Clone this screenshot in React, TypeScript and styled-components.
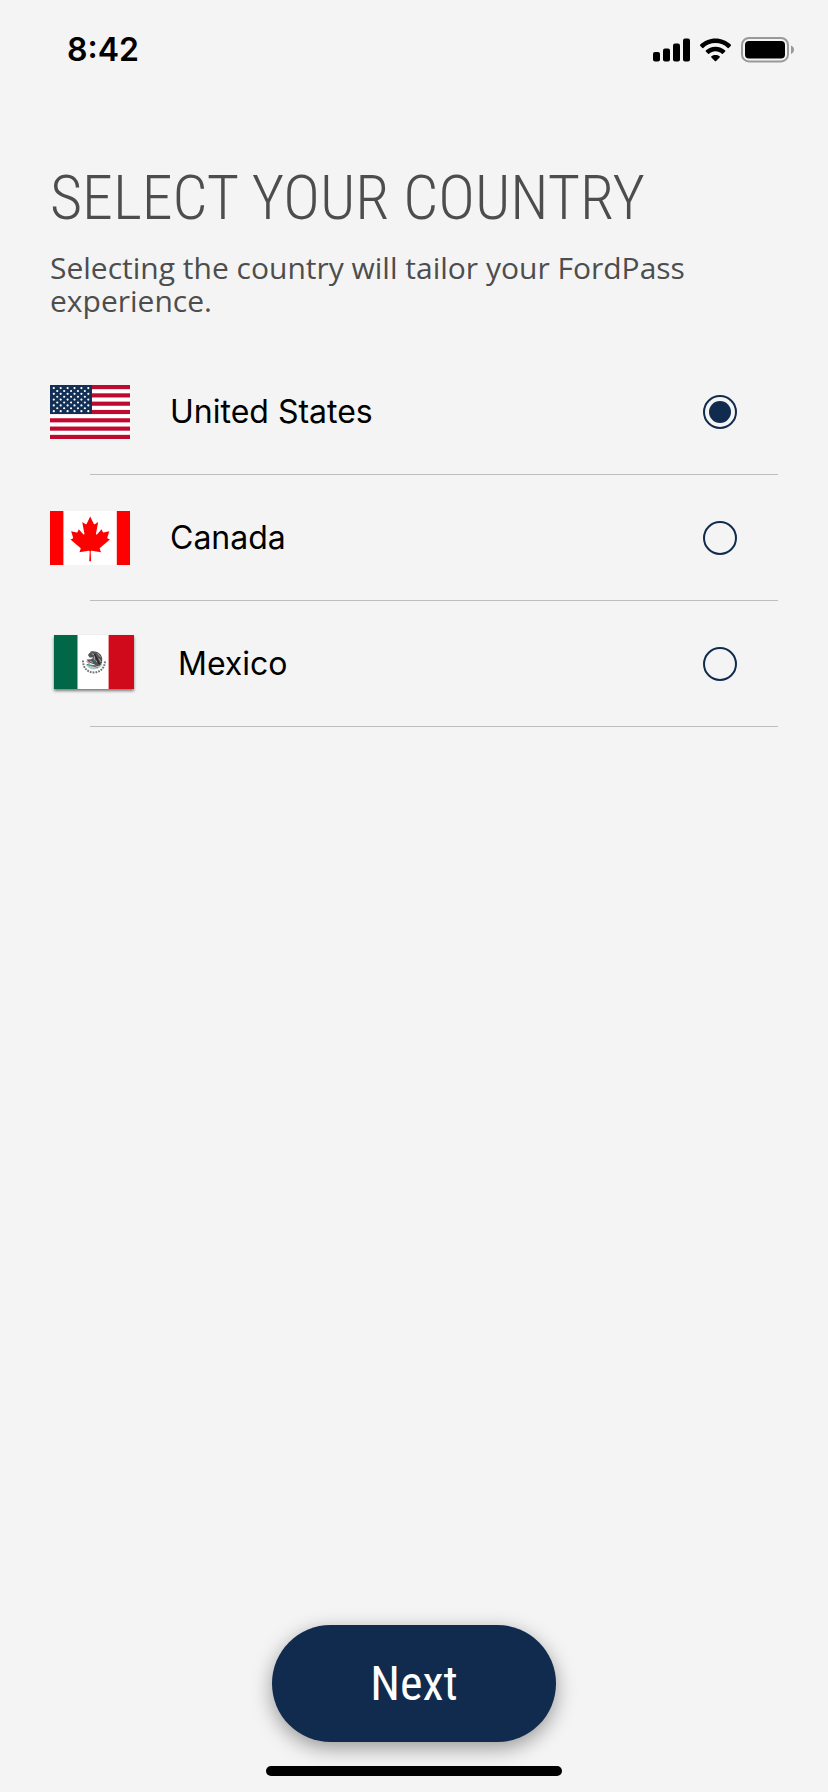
import React, { useState } from "react";
import styled, { createGlobalStyle } from "styled-components";

const NAVY = "#112b4e";

const GlobalStyle = createGlobalStyle`
  *, *::before, *::after { box-sizing: border-box; }
  body { margin: 0; background: #f4f4f4; }
`;

const Screen = styled.div`
  display: flex;
  flex-direction: column;
  min-height: 100vh;
  background: #f4f4f4;
  color: #000;
  font-family: Inter, "Liberation Sans", sans-serif;
`;

const StatusBar = styled.header`
  display: flex;
  align-items: center;
  justify-content: space-between;
  height: 100px;
  padding: 0 34px 0 67px;
`;

const Clock = styled.span`
  font-size: 32px;
  line-height: 40px;
  font-weight: 600;
`;

const StatusIcons = styled.div`
  display: flex;
  align-items: center;
  gap: 10px;

  svg { display: block; }
`;

const Content = styled.main`
  flex: 1;
  display: flex;
  flex-direction: column;
  padding: 60px 50px 0;
`;

const Title = styled.h1`
  margin: 0;
  color: #4d4d4d;
  font: 350 62px/76px "Roboto Condensed", Roboto, sans-serif;
`;

const Subtitle = styled.p`
  margin: 15px 0 0;
  color: #4d4d4d;
  font: 400 30px/33px "Open Sans", "Noto Sans", sans-serif;
`;

const CountryList = styled.fieldset`
  display: flex;
  flex-direction: column;
  margin: 32px 0 0;
  padding: 0;
  border: 0;
`;

const CountryRow = styled.label`
  display: flex;
  align-items: center;
  gap: 40px;
  height: 126px;
  padding: 0 41px 1px 0;
  background: linear-gradient(#bdbdbd, #bdbdbd) 40px 100% / 100% 1px no-repeat;
  cursor: pointer;

  svg { display: block; flex: none; }
`;

const CountryName = styled.span`
  flex: 1;
  font-size: 32px;
  line-height: 40px;
`;

const Radio = styled.input`
  appearance: none;
  display: grid;
  place-items: center;
  flex: none;
  width: 34px;
  height: 34px;
  margin: 0;
  border: 2px solid ${NAVY};
  border-radius: 50%;
  cursor: pointer;

  &:checked::before {
    content: "";
    width: 22px;
    height: 22px;
    border-radius: 50%;
    background: ${NAVY};
  }
`;

const Footer = styled.footer`
  display: flex;
  flex-direction: column;
  align-items: center;
  gap: 24px;
  padding-bottom: 16px;
`;

const NextButton = styled.button`
  width: 284px;
  height: 117px;
  padding: 0;
  border: 0;
  border-radius: 59px;
  background: ${NAVY};
  box-shadow: 0 6px 20px rgba(0, 0, 0, 0.38);
  color: #fff;
  font: 400 48px/56px "Roboto Condensed", Roboto, sans-serif;
  cursor: pointer;
`;

const HomeIndicator = styled.div`
  width: 296px;
  height: 10px;
  border-radius: 5px;
  background: #000;
`;

const SignalIcon = () => (
  <svg width="37" height="24" viewBox="0 0 37 24" aria-hidden="true">
    <rect x="0" y="14" width="7" height="9.5" rx="2" />
    <rect x="10" y="10.5" width="7" height="13" rx="2" />
    <rect x="20" y="5.5" width="7" height="18" rx="2" />
    <rect x="30" y="0.5" width="7" height="23" rx="2" />
  </svg>
);

const WifiIcon = () => (
  <svg width="31" height="24" viewBox="0.5 0 31 24" aria-hidden="true">
    <path d="M16 0.5C22 0.5 27.4 2.9 31.4 6.7Q31.9 7.2 31.4 7.7L29.2 9.9Q28.7 10.4 28.2 9.9C25 6.9 20.7 5.1 16 5.1S7 6.9 3.8 9.9Q3.3 10.4 2.8 9.9L0.6 7.7Q0.1 7.2 0.6 6.7C4.6 2.9 10 0.5 16 0.5Z" />
    <path d="M16 8.7C19.8 8.7 23.2 10.2 25.7 12.5Q26.2 13 25.7 13.5L23.4 15.7Q22.9 16.2 22.4 15.7C20.7 14.2 18.5 13.2 16 13.2S11.3 14.2 9.6 15.7Q9.1 16.2 8.6 15.7L6.3 13.5Q5.8 13 6.3 12.5C8.8 10.2 12.2 8.7 16 8.7Z" />
    <path d="M16 16.9C17.6 16.9 19 17.4 20.1 18.3Q20.7 18.8 20.1 19.4L16.6 23Q16 23.6 15.4 23L11.9 19.4Q11.3 18.8 11.9 18.3C13 17.4 14.4 16.9 16 16.9Z" />
  </svg>
);

const BatteryIcon = () => (
  <svg width="53" height="26" viewBox="0 0 53 26" aria-hidden="true">
    <rect x="1" y="1" width="46" height="23.4" rx="7" fill="none" stroke="#999" strokeWidth="2" />
    <rect x="4" y="4" width="40" height="17.4" rx="4" />
    <path d="M50 8.5C52 9.2 53 10.8 53 12.7S52 16.2 50 16.9Z" fill="#999" />
  </svg>
);

const stars: Array<[number, number]> = [];
for (let row = 0; row < 9; row++) {
  for (let col = row % 2; col < 11; col += 2) {
    stars.push([3.8 + col * 3.45, 3.1 + row * 2.88]);
  }
}

const UnitedStatesFlag = () => (
  <svg width="80" height="54" viewBox="0 0 80 54" aria-hidden="true">
    <rect width="80" height="54" fill="#fff" />
    {[0, 1, 2, 3, 4, 5, 6].map((i) => (
      <rect key={i} y={(i * 108) / 13} width="80" height={54 / 13} fill="#bf0a30" />
    ))}
    <rect width="42" height="29" fill="#122f55" />
    {stars.map(([x, y]) => (
      <circle key={`${x}-${y}`} cx={x} cy={y} r="1.1" fill="#fff" />
    ))}
  </svg>
);

const CanadaFlag = () => (
  <svg width="80" height="54" viewBox="0 0 80 54" aria-hidden="true">
    <rect width="80" height="54" fill="#fff" />
    <rect width="13.4" height="54" fill="#f00" />
    <rect x="66.8" width="13.2" height="54" fill="#f00" />
    <path
      transform="translate(40.2 27.8) scale(0.0106 0.0111)"
      fill="#f00"
      d="m-90 2030 45-863a95 95 0 0 0-111-98l-859 151 116-320a65 65 0 0 0-20-73l-941-762 212-99a65 65 0 0 0 34-79l-186-572 542 115a65 65 0 0 0 73-38l105-247 423 454a65 65 0 0 0 111-57l-204-1052 327 189a65 65 0 0 0 91-27l332-652 332 652a65 65 0 0 0 91 27l327-189-204 1052a65 65 0 0 0 111 57l423-454 105 247a65 65 0 0 0 73 38l542-115-186 572a65 65 0 0 0 34 79l212 99-941 762a65 65 0 0 0-20 73l116 320-859-151a95 95 0 0 0-111 98l45 863z"
    />
  </svg>
);

const MexicoFlag = () => (
  <svg width="88" height="62" viewBox="0 0 88 62" aria-hidden="true">
    <defs>
      <filter id="flag-shadow" x="-10%" y="-10%" width="120%" height="130%">
        <feDropShadow dx="0" dy="2" stdDeviation="1.6" floodOpacity="0.5" />
      </filter>
    </defs>
    <rect x="4" y="2" width="80" height="54" fill="#fff" filter="url(#flag-shadow)" />
    <rect x="4" y="2" width="23.5" height="54" fill="#006847" />
    <rect x="58.6" y="2" width="25.4" height="54" fill="#d00a1b" />
    <path d="M33 27.5C33 35 37.5 39.4 43.8 39.4S55 35 55 27.5" fill="none" stroke="#777" strokeWidth="2" strokeDasharray="1.8 1" />
    <path d="M35.5 31Q38 36 43.5 36.4Q50 36.2 52.5 31Q44 33.5 35.5 31Z" fill="#a9c7c2" />
    <path d="M38 22C39.5 18.5 43.5 17.8 46.5 18.8C51 20.4 53.2 24.5 52 29.5C50.5 33.5 47 34 44.5 31.5L39 29.5L36.5 26.5L41 26.3L43.5 24.5L39.5 24.6Z" fill="#555" />
    <path d="M42 20.5L45 22.5L44 26L47 29M47.5 20.5L50.5 24M49 25.5L51 29M39.5 28L43 29.5" fill="none" stroke="#b9b3ad" strokeWidth="0.9" />
    <path d="M40.5 18.8L44 18.3M42.5 32.7L48 34.5M36.5 28L39.5 31" fill="none" stroke="#c5566a" strokeWidth="1" />
    <path d="M37 31.5L46 33.2M43 27L46 28" fill="none" stroke="#2f7d78" strokeWidth="1.2" />
    <path d="M44.5 21L46.5 25L49.5 31.5" fill="none" stroke="#292929" strokeWidth="1.6" />
  </svg>
);

const countries = [
  { id: "us", name: "United States", Flag: UnitedStatesFlag },
  { id: "ca", name: "Canada", Flag: CanadaFlag },
  { id: "mx", name: "Mexico", Flag: MexicoFlag },
];

export default function App() {
  const [selected, setSelected] = useState("us");

  return (
    <Screen>
      <GlobalStyle />
      <StatusBar>
        <Clock>8:42</Clock>
        <StatusIcons>
          <SignalIcon />
          <WifiIcon />
          <BatteryIcon />
        </StatusIcons>
      </StatusBar>
      <Content>
        <Title>SELECT YOUR COUNTRY</Title>
        <Subtitle>Selecting the country will tailor your FordPass experience.</Subtitle>
        <CountryList aria-label="Country">
          {countries.map(({ id, name, Flag }) => (
            <CountryRow key={id} htmlFor={id}>
              <Flag />
              <CountryName>{name}</CountryName>
              <Radio
                type="radio"
                id={id}
                name="country"
                value={id}
                checked={selected === id}
                onChange={() => setSelected(id)}
              />
            </CountryRow>
          ))}
        </CountryList>
      </Content>
      <Footer>
        <NextButton type="button">Next</NextButton>
        <HomeIndicator />
      </Footer>
    </Screen>
  );
}
